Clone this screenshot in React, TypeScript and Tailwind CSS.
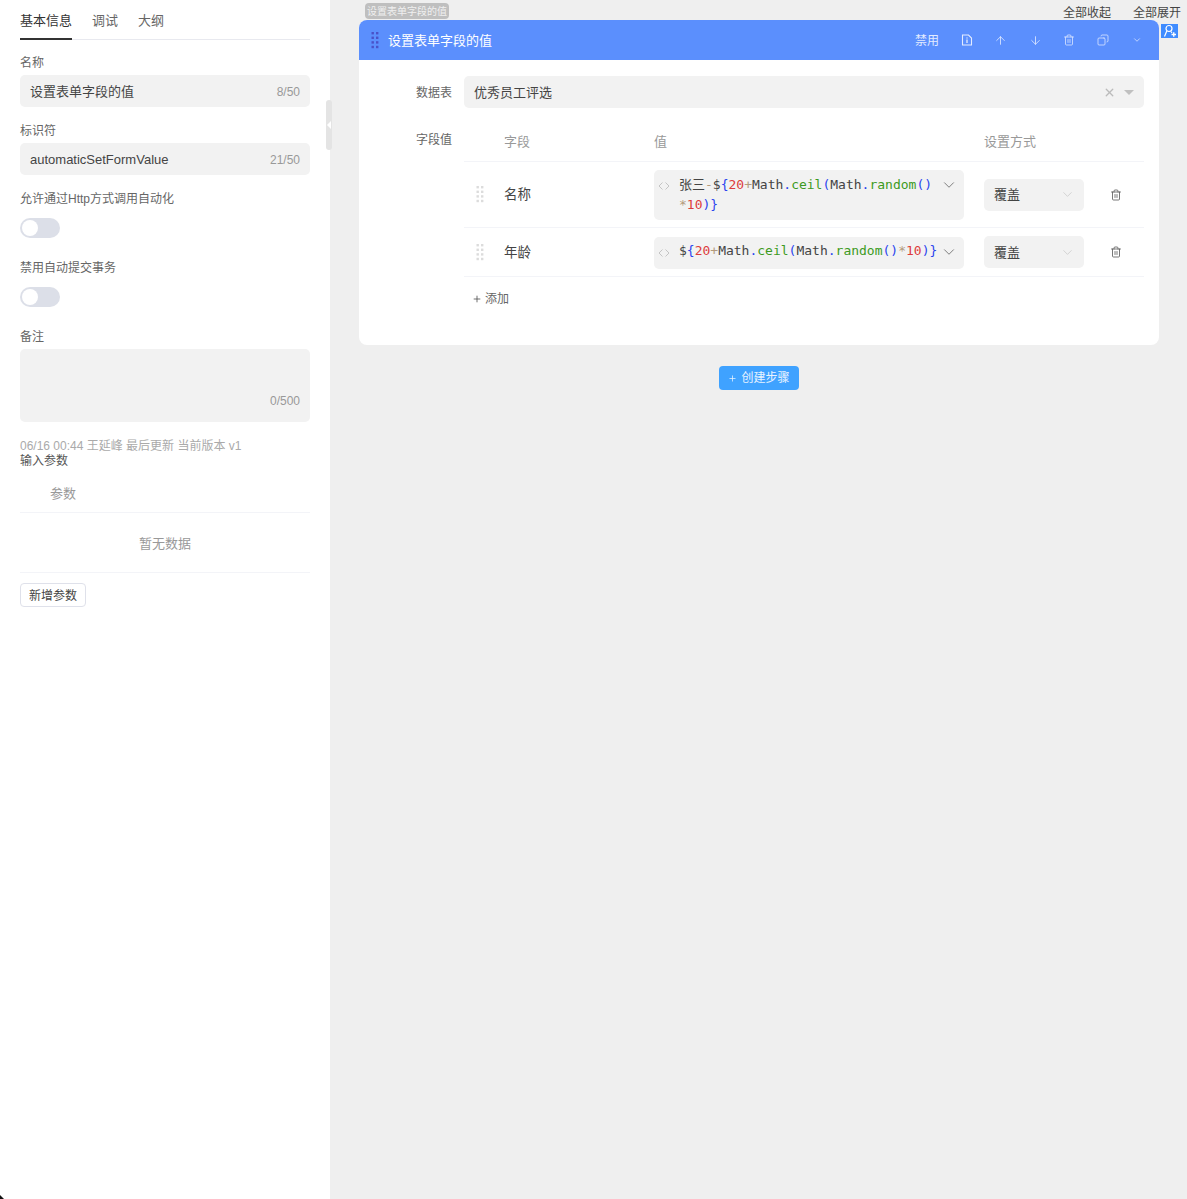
import * as React from "react";
import { ArrowDown, ArrowUp, ChevronDown, Copy, Plus, Trash2, X } from "lucide-react";

const sans = "font-['Liberation_Sans','Noto_Sans_CJK_SC',sans-serif]";

function Label({ children }: { children: React.ReactNode }) {
  return <div className="h-[18px] text-[12px] leading-[20px] text-[#666]">{children}</div>;
}

function TextField({ value, count }: { value: string; count: string }) {
  return (
    <div className="mt-[4px] flex h-8 items-center justify-between rounded-[5px] bg-[#f2f2f2] px-[10px] pt-[1px]">
      <span className="text-[13px] text-[#444]">{value}</span>
      <span className="text-[12px] text-[#999]">{count}</span>
    </div>
  );
}

function Toggle() {
  return (
    <div className="mt-[11px] flex h-5 w-10 items-center rounded-full bg-[#dcdfe8] pl-[2px]">
      <div className="h-4 w-4 rounded-full bg-white" />
    </div>
  );
}

function DragDots({ className }: { className: string }) {
  return (
    <svg width="8" height="17" viewBox="0 0 8 17" className={className} fill="currentColor">
      {[0, 4.6, 9.2, 13.8].map((y) => (
        <g key={y}>
          <rect x="0.5" y={y} width="2.4" height="2.4" />
          <rect x="5" y={y} width="2.4" height="2.4" />
        </g>
      ))}
    </svg>
  );
}

function DocIcon() {
  return (
    <svg width="12" height="12" viewBox="0 0 12 12" fill="none" stroke="currentColor" strokeWidth="1.100">
      <path d="M1.500 1h6L10.500 4v7h-9z" />
      <path d="M6 3.500v1M6 5.500v3.500" strokeWidth="1.300" />
    </svg>
  );
}

function UserAddIcon() {
  return (
    <svg width="17" height="14" viewBox="0 0 17 14" className="block">
      <rect width="17" height="14" fill="#3f8cff" />
      <circle cx="8" cy="4.500" r="3" fill="none" stroke="#fff" strokeWidth="1.200" />
      <path d="M5.800 7 3.500 12.500M9.800 7.500l1.200 1.500" fill="none" stroke="#fff" strokeWidth="1.200" />
      <path d="M10.500 10.500h4.500M12.750 8.300v4.500" stroke="#fff" strokeWidth="1.400" />
    </svg>
  );
}

function B({ children }: { children: React.ReactNode }) {
  return <span className="text-[#2a44ee]">{children}</span>;
}
function N({ children }: { children: React.ReactNode }) {
  return <span className="text-[#dd3c3c]">{children}</span>;
}
function O({ children }: { children: React.ReactNode }) {
  return <span className="text-[#b39a7c]">{children}</span>;
}
function F({ children }: { children: React.ReactNode }) {
  return <span className="text-[#3c9a22]">{children}</span>;
}

function Expression() {
  return (
    <>
      $<B>{"{"}</B>
      <N>20</N>
      <O>+</O>Math<B>.</B>
      <F>ceil</F>
      <B>(</B>Math<B>.</B>
      <F>random</F>
      <B>()</B>
      <wbr />
      <O>*</O>
      <N>10</N>
      <B>)</B>
      <B>{"}"}</B>
    </>
  );
}

function Row({
  name,
  rowClass,
  boxClass,
  children,
}: {
  name: string;
  rowClass: string;
  boxClass: string;
  children: React.ReactNode;
}) {
  return (
    <div className={`flex items-center border-b-[1.5px] border-[#f3f4f8] ${rowClass}`}>
      <div className="flex w-10 pl-[12px]">
        <DragDots className="text-[#dcdcdc]" />
      </div>
      <div className="w-[150px] pt-[2px] text-[13.500px] text-[#444]">{name}</div>
      <div className={`relative w-[310px] rounded-[5px] bg-[#f2f2f2] pl-[25px] pr-[26px] ${boxClass}`}>
        <span className="absolute left-[4px] top-[10px] text-[#c4c4c4]">
          <svg width="12" height="12" viewBox="0 0 12 12" fill="none" stroke="currentColor" strokeWidth="1">
            <path d="M4.500 2.500 1 6l3.500 3.500M7.500 2.500 11 6 7.500 9.500" />
          </svg>
        </span>
        <div className="font-['DejaVu_Sans_Mono','Noto_Sans_CJK_SC',monospace] text-[13px] leading-[19.500px] text-[#444]">
          {children}
        </div>
        <ChevronDown className="absolute right-[6px] top-[6px] h-[18px] w-[18px] text-[#666]" strokeWidth={1.100} />
      </div>
      <div className="ml-5 flex h-8 w-[100px] items-center justify-between rounded-[5px] bg-[#f2f2f2] pl-[10px] pr-[9px]">
        <span className="pt-[1px] text-[13px] text-[#444]">覆盖</span>
        <ChevronDown className="h-[15px] w-[15px] text-[#c4c4c4]" strokeWidth={1.100} />
      </div>
      <Trash2 className="ml-[26px] h-[12px] w-[12px] text-[#555]" strokeWidth={1.600} />
    </div>
  );
}

export default function App() {
  return (
    <div className={`relative flex h-[1199px] w-[1187px] overflow-hidden bg-[#efefef] ${sans}`}>
      {/* left panel */}
      <aside className="relative h-full w-[330px] shrink-0 bg-white px-5">
        <div className="flex h-10 gap-5 border-b border-[#e8e9ef] pt-[11px]">
          <div className="h-[29px] border-b-2 border-[#333] text-[13px] leading-[20px] text-[#333]">基本信息</div>
          <div className="text-[13px] leading-[20px] text-[#666]">调试</div>
          <div className="text-[13px] leading-[20px] text-[#666]">大纲</div>
        </div>

        <div className="mt-[13px]">
          <Label>名称</Label>
          <TextField value="设置表单字段的值" count="8/50" />
        </div>
        <div className="mt-[14px]">
          <Label>标识符</Label>
          <TextField value="automaticSetFormValue" count="21/50" />
        </div>
        <div className="mt-[14px]">
          <Label>允许通过Http方式调用自动化</Label>
          <Toggle />
        </div>
        <div className="mt-[20px]">
          <Label>禁用自动提交事务</Label>
          <Toggle />
        </div>
        <div className="mt-[20px]">
          <Label>备注</Label>
          <div className="mt-[4px] flex h-[73px] items-end justify-end rounded-[5px] bg-[#f2f2f2] px-[10px] pb-[13px]">
            <span className="text-[12px] leading-[16px] text-[#999]">0/500</span>
          </div>
        </div>
        <div className="mt-[15px] text-[12px] leading-[18px] text-[#aaa]">06/16 00:44 王延峰 最后更新 当前版本 v1</div>
        <div className="h-[14px] text-[12px] leading-[12px] text-[#555]">输入参数</div>

        <div className="mt-[10px] flex h-[34px] items-center border-b-[1.5px] border-[#f3f4f8] pl-[30px] pb-[3px] text-[13px] text-[#999]">参数</div>
        <div className="flex h-[60px] items-center justify-center border-b-[1.5px] border-[#f3f4f8] pt-[3px] text-[13px] text-[#999]">暂无数据</div>
        <button className="mt-[10px] flex h-6 w-[66px] items-center justify-center rounded-[4px] border border-[#dfe1ea] pt-[1px] text-[12px] text-[#444]">新增参数</button>
      </aside>

      {/* collapse handle */}
      <div className="absolute left-[326px] top-[100px] flex h-[50px] w-[6px] items-center justify-center rounded-[3px] bg-[#e4e4e4]">
        <span className="h-0 w-0 border-y-[4px] border-r-[4px] border-y-transparent border-r-white" />
      </div>

      {/* canvas */}
      <main className="flex-1 pl-[29px] pr-[28px] pt-5">
        <section className="h-[325px] overflow-hidden rounded-[8px] bg-white">
          <header className="flex h-10 items-center bg-[#5b8ffd] pl-[12px] pr-[17px] text-white">
            <DragDots className="text-[#4a52c8]" />
            <span className="ml-[9px] flex-1 pt-[1px] text-[13px]">设置表单字段的值</span>
            <div className="flex items-center text-[#e3ebff]">
              <span className="pt-[1px] text-[12px]">禁用</span>
              <span className="ml-[22px]"><DocIcon /></span>
              <ArrowUp className="ml-[21px] h-[13px] w-[13px]" strokeWidth={1.500} />
              <ArrowDown className="ml-[22px] h-[13px] w-[13px]" strokeWidth={1.500} />
              <Trash2 className="ml-[21px] h-[12px] w-[12px]" strokeWidth={1.500} />
              <Copy className="ml-[22px] h-[12px] w-[12px] -scale-x-100" strokeWidth={1.500} />
              <ChevronDown className="ml-[23px] h-[10px] w-[10px]" strokeWidth={1.700} />
            </div>
          </header>

          <div className="pl-[105px] pr-[15px] pt-4">
            <div className="flex h-8 items-center rounded-[5px] bg-[#f2f2f2] pl-[10px] pr-[10px]">
              <span className="flex-1 pt-[1px] text-[13px] text-[#444]">优秀员工评选</span>
              <X className="h-[13px] w-[13px] text-[#bbb]" strokeWidth={2.500} />
              <span className="ml-[8px] h-0 w-0 border-x-[5px] border-t-[5px] border-x-transparent border-t-[#c0c0c0]" />
            </div>

            <div className="relative mt-[19px]">
              <span className="absolute left-[-48px] top-[4px] text-[12px] leading-[18px] text-[#666]">字段值</span>
              <span className="absolute left-[-48px] top-[-43px] text-[12px] leading-[18px] text-[#666]">数据表</span>
              <div className="flex h-[35px] items-start border-b-[1.5px] border-[#f3f4f8] pt-[8px] text-[13px] leading-[14px] text-[#999]">
                <div className="w-10" />
                <div className="w-[150px]">字段</div>
                <div className="w-[330px]">值</div>
                <div>设置方式</div>
              </div>
              <Row name="名称" rowClass="h-[66px]" boxClass="pt-[5.500px] pb-[5.500px]">
                张三<O>-</O>
                <Expression />
              </Row>
              <Row name="年龄" rowClass="h-[49px]" boxClass="mt-[2px] pt-[4px] pb-[8.500px]">
                <Expression />
              </Row>
              <div className="mt-[14px] flex items-center pl-[8px] text-[12px] leading-[16px] text-[#666]">
                <Plus className="h-[10px] w-[10px] text-[#555]" strokeWidth={2} />
                <span className="ml-[3px]">添加</span>
              </div>
            </div>
          </div>
        </section>

        <div className="mt-[21px] flex justify-center">
          <button className="flex h-6 w-[80px] items-center justify-center gap-[4px] rounded-[4px] bg-[#3fa2ff] text-[12px] text-[#e8f3ff]">
            <Plus className="h-[9px] w-[9px]" strokeWidth={2} />
            创建步骤
          </button>
        </div>
      </main>

      {/* overlays */}
      <div className="absolute left-[365px] top-[3px] flex h-[16px] w-[84px] items-center justify-center rounded-[4px] bg-[#bfbfbf] text-[10px] text-[#f0f0f0]">设置表单字段的值</div>
      <div className="absolute right-[76px] top-[5px] text-[12px] leading-[16px] text-[#444]">全部收起</div>
      <div className="absolute right-[6px] top-[5px] text-[12px] leading-[16px] text-[#444]">全部展开</div>
      <div className="absolute left-[1161px] top-[24px]"><UserAddIcon /></div>
      <div className="absolute bottom-0 left-0 h-[4px] w-[4px] bg-[#111] [clip-path:polygon(0_0,100%_100%,0_100%)]" />
    </div>
  );
}
